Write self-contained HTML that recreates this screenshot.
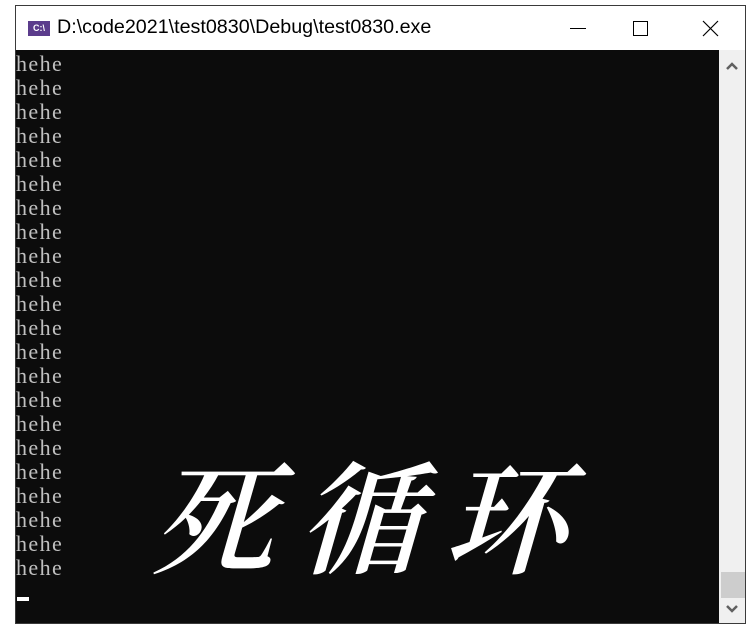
<!DOCTYPE html>
<html><head><style>
body{margin:0;width:753px;height:635px;background:#fff;position:relative;overflow:hidden;font-family:"Liberation Sans","Noto Sans CJK SC",sans-serif}
.win{position:absolute;left:15px;top:5px;width:729px;height:617px;border:1px solid #3a3a3a;background:#fff}
.title{position:absolute;left:0;top:0;width:729px;height:44px}
.icon{position:absolute;left:12px;top:15px;width:22px;height:15px;background:#5b3c8c;color:#fff;font-size:9px;line-height:15px;text-align:center;font-weight:bold}
.ttext{position:absolute;left:41px;top:10px;font-size:19.7px;color:#000}
.con{position:absolute;left:0;top:44px;width:703px;height:573px;background:#0c0c0c;overflow:hidden}
.lines{position:absolute;left:0px;top:2px;font-family:"Liberation Serif","Noto Serif CJK SC",serif;font-size:22px;line-height:24px;color:#c0c0c0;letter-spacing:1.4px}
.sb{position:absolute;left:703px;top:44px;width:26px;height:573px;background:#f0f0f0}
.big{position:absolute;left:150px;top:418px;font-family:"Noto Serif CJK SC",serif;font-weight:600;font-size:122px;color:#fff;transform:skewX(-16deg);letter-spacing:24px;white-space:nowrap}
</style></head><body>
<div class="win">
<div class="title">
<div class="icon">C:\</div>
<div class="ttext">D:\code2021\test0830\Debug\test0830.exe</div>
<div style="position:absolute;left:554px;top:22px;width:16px;height:1px;background:#000"></div>
<div style="position:absolute;left:617px;top:15px;width:13px;height:13px;border:1px solid #000"></div>
<svg style="position:absolute;left:686px;top:14px" width="17" height="17"><path d="M1 1L16 16M16 1L1 16" stroke="#000" stroke-width="1.2"/></svg>
</div>
<div class="con">
<div class="lines">hehe<br>hehe<br>hehe<br>hehe<br>hehe<br>hehe<br>hehe<br>hehe<br>hehe<br>hehe<br>hehe<br>hehe<br>hehe<br>hehe<br>hehe<br>hehe<br>hehe<br>hehe<br>hehe<br>hehe<br>hehe<br>hehe</div>
<div style="position:absolute;left:1px;top:547px;width:12px;height:4px;background:#fff"></div>
</div>
<div class="big">死循环</div>
<div class="sb">
<svg style="position:absolute;left:7px;top:12px" width="12" height="8"><path d="M1 7L6 2L11 7" stroke="#606060" stroke-width="2.5" fill="none"/></svg>
<div style="position:absolute;left:2px;top:522px;width:24px;height:26px;background:#cdcdcd"></div>
<svg style="position:absolute;left:7px;top:555px" width="12" height="8"><path d="M1 1L6 6L11 1" stroke="#606060" stroke-width="2.5" fill="none"/></svg>
</div>
</div>
</body></html>
